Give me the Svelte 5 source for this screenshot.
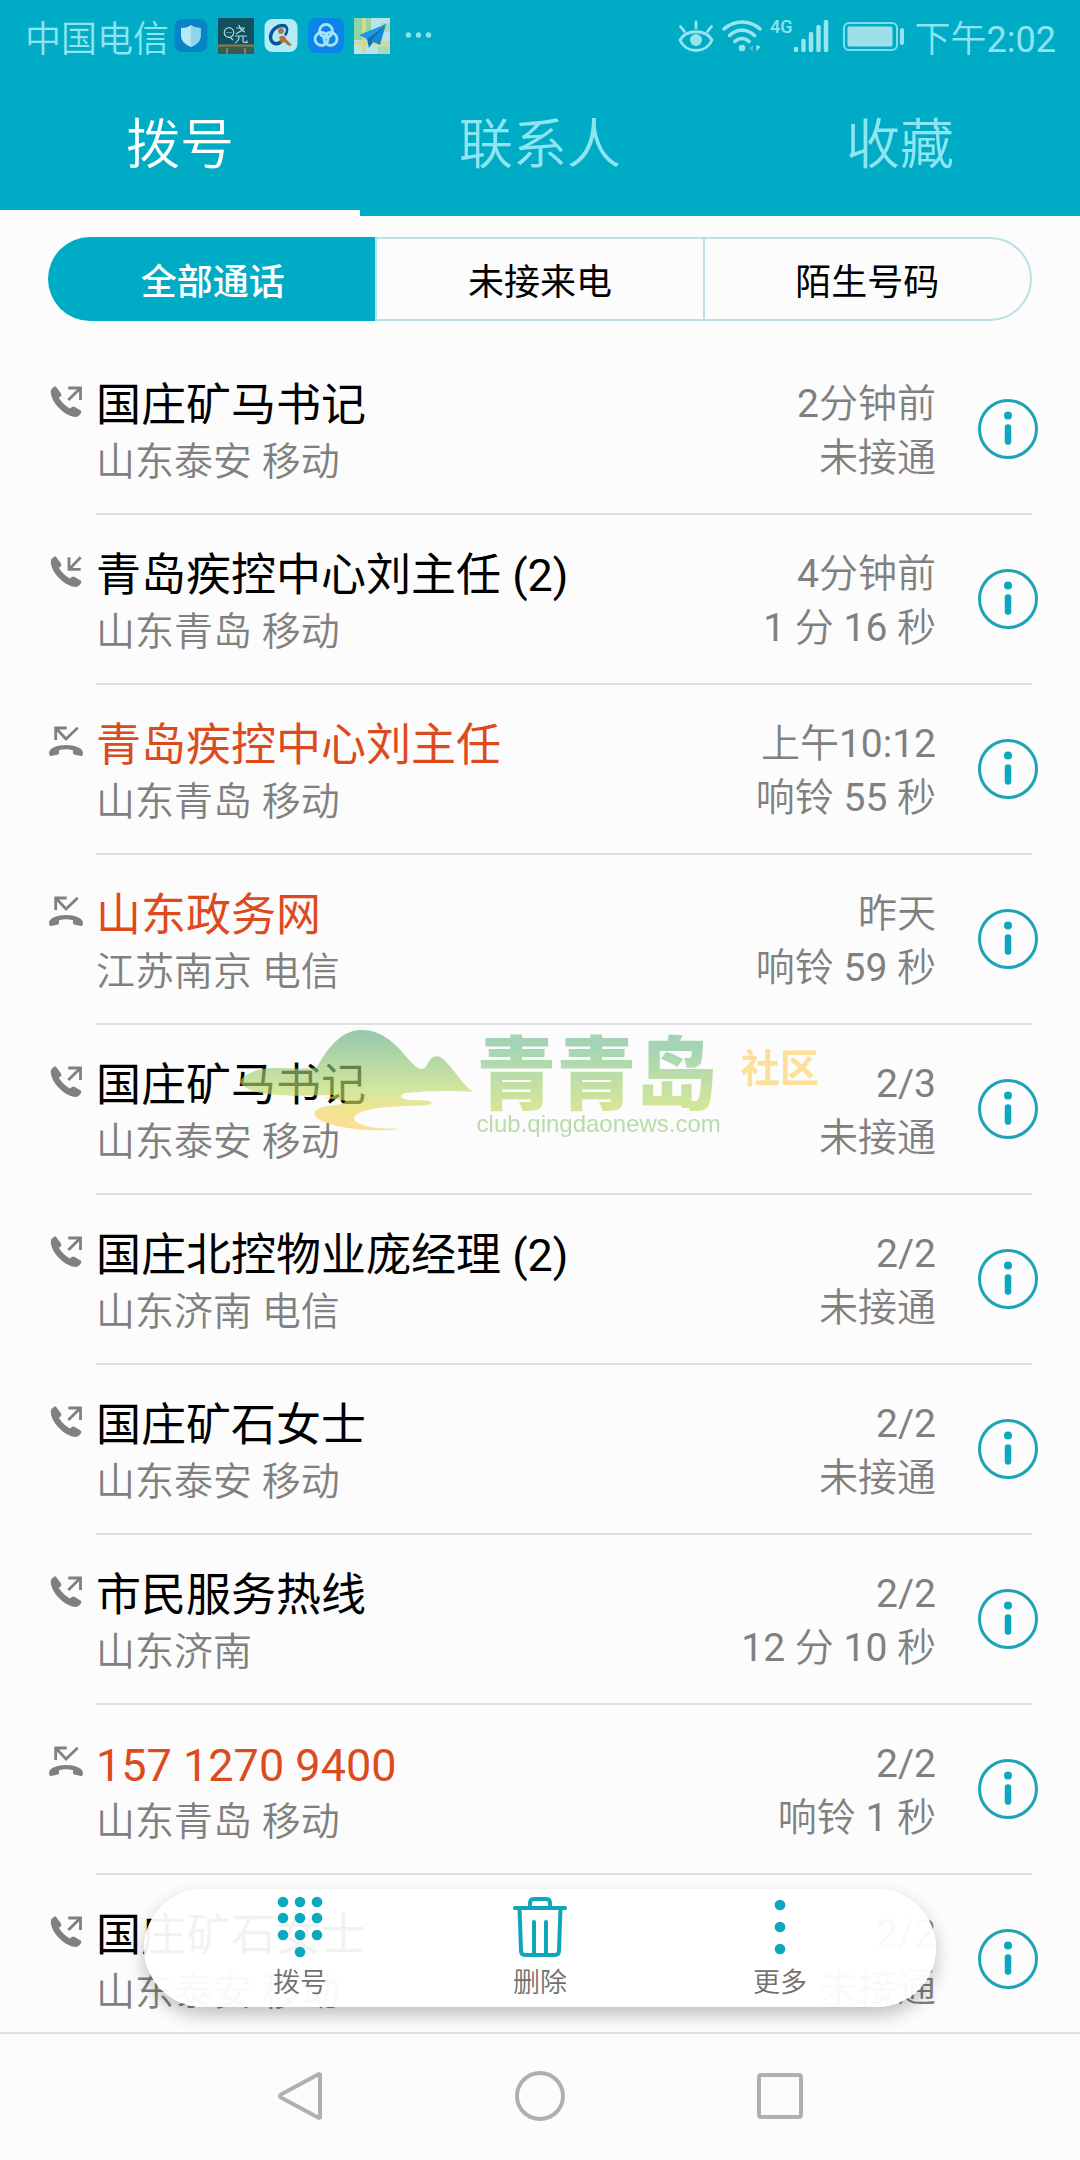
<script lang="ts">
  type CallKind = "out" | "in" | "missed";

  interface Call {
    kind: CallKind;
    name: string;
    place: string;
    time: string;
    status: string;
  }

  const tabs = ["拨号", "联系人", "收藏"];
  const filters = ["全部通话", "未接来电", "陌生号码"];

  const calls: Call[] = [
    { kind: "out", name: "国庄矿马书记", place: "山东泰安 移动", time: "2分钟前", status: "未接通" },
    { kind: "in", name: "青岛疾控中心刘主任 (2)", place: "山东青岛 移动", time: "4分钟前", status: "1 分 16 秒" },
    { kind: "missed", name: "青岛疾控中心刘主任", place: "山东青岛 移动", time: "上午10:12", status: "响铃 55 秒" },
    { kind: "missed", name: "山东政务网", place: "江苏南京 电信", time: "昨天", status: "响铃 59 秒" },
    { kind: "out", name: "国庄矿马书记", place: "山东泰安 移动", time: "2/3", status: "未接通" },
    { kind: "out", name: "国庄北控物业庞经理 (2)", place: "山东济南 电信", time: "2/2", status: "未接通" },
    { kind: "out", name: "国庄矿石女士", place: "山东泰安 移动", time: "2/2", status: "未接通" },
    { kind: "out", name: "市民服务热线", place: "山东济南", time: "2/2", status: "12 分 10 秒" },
    { kind: "missed", name: "157 1270 9400", place: "山东青岛 移动", time: "2/2", status: "响铃 1 秒" },
    { kind: "out", name: "国庄矿石女士", place: "山东泰安 移动", time: "2/2", status: "未接通" },
  ];

  let activeTab = $state(0);
  let activeFilter = $state(0);
</script>

<div class="phone">
  <header>
    <div class="status">
      <span class="carrier">中国电信</span>
      <div class="apps">
        <svg width="34" height="36" viewBox="0 0 34 36">
          <rect x="0.5" y="1" width="33" height="33" rx="8" fill="#0784c8" />
          <path d="M17 7c3 2.400 6 3 9.600 3v8c0 5-4 8.500-9.600 11C11.400 26.500 7 23 7 18v-8c4 0 7-.6 10-3z" fill="#b5e8f5" />
          <path d="M17 7c3 2.400 6 3 9.600 3v8c0 5-4 8.500-9.600 11z" fill="#8fd3ec" />
        </svg>
        <svg width="36" height="36" viewBox="0 0 36 36">
          <rect width="36" height="36" fill="#12505f" />
          <path d="M0 27h36v9H0z" fill="#3c5a50" />
          <path d="M0 27.500h36" stroke="#8a7d4a" stroke-width="2" />
          <path d="M9 30v6M27 30v6" stroke="#7d7f62" stroke-width="2" />
          <g fill="none" stroke="#a9dbe2" stroke-width="1.200">
            <circle cx="11" cy="14.500" r="4.800" />
            <path d="M12 19l3 3M8.500 14.500h1m1 0h1m1 0h1" />
            <path d="M18 10h9M21 7c1 4 3 6 6 7M26 11l-8 5M17 18h12M21 18c0 4-1 5-4 7M25 18v5c0 1.500 1 1.500 4 1.500v-2" />
          </g>
        </svg>
        <svg width="34" height="36" viewBox="0 0 34 36">
          <rect x="0.500" y="1" width="33" height="33" rx="8" fill="#b4ecf6" />
          <path d="M21 8C14 6 7 12 6.500 19C7 27 14 27 18 23" fill="none" stroke="#0b5396" stroke-width="3.500" stroke-linecap="round" />
          <path d="M20 7.500c4 1 4 6 1 10" fill="none" stroke="#0b5396" stroke-width="2.500" />
          <circle cx="17" cy="13" r="3" fill="#a8794d" />
          <path d="M15 19c3-2 6-2 7 2l6 6-3 1-5-4-3 1z" fill="#b8713c" />
        </svg>
        <svg width="36" height="36" viewBox="0 0 36 36">
          <rect width="36" height="35" rx="8" fill="#0a84ea" />
          <g fill="none" stroke="#a8e3f5" stroke-width="2.800">
            <circle cx="18" cy="13" r="6.500" />
            <circle cx="13.500" cy="21" r="6.500" />
            <circle cx="22.500" cy="21" r="6.500" />
          </g>
        </svg>
        <svg width="36" height="36" viewBox="0 0 36 36">
          <rect width="36" height="36" fill="#b9e3ec" />
          <path d="M0 0h17v22H0z" fill="#8fd6a4" />
          <path d="M27 5h9v9h-9zM24 28h12v8H24z" fill="#a5dcb4" />
          <path d="M10 0v36M0 25h36" stroke="#d5d88f" stroke-width="4" />
          <path d="M32 6L5 17l8 4z" fill="#1a9be0" />
          <path d="M32 6L13 21l2 9 4-6z" fill="#0d6fb5" />
          <path d="M32 6L17 23l9 4z" fill="#1689d2" />
        </svg>
        <svg width="36" height="36" viewBox="0 0 36 36" fill="#8ae0ee">
          <circle cx="8.500" cy="17" r="2.700" />
          <circle cx="18.500" cy="17" r="2.700" />
          <circle cx="28.500" cy="17" r="2.700" />
        </svg>
      </div>
      <div class="signals">
        <svg width="36" height="36" viewBox="0 0 36 36" fill="none" stroke="#97e3ee" stroke-width="2.800" stroke-linecap="round">
          <path d="M2 22C8 11 28 11 34 22C28 36 8 36 2 22z" />
          <path d="M2.500 8.500l4 5M18 4v6M33.500 8.500l-4 5" />
          <circle cx="18" cy="22" r="6" fill="#97e3ee" stroke="none" />
        </svg>
        <svg width="40" height="36" viewBox="0 0 40 36" fill="none" stroke="#97e3ee" stroke-width="3.500" stroke-linecap="round">
          <path d="M2 11C12 1.500 28 1.500 38 11M7.500 17.500c7-7 18-7 25 0M13 23.500c4-4 10-4 14 0" />
          <circle cx="20" cy="30" r="3.300" fill="#97e3ee" stroke="none" />
          <path d="M34.500 27v6.500l4-5z" fill="#97e3ee" stroke="none" />
          <path d="M31 27v6.500l-4-3z" fill="#45c5d8" stroke="none" />
        </svg>
        <div class="cell">
          <span>4G</span>
          <svg width="36" height="36" viewBox="0 0 36 36" stroke="#97e3ee" stroke-width="4.500" stroke-linecap="round">
            <path d="M3 31v1M10.500 23v9M18 16v16M25.500 9v23M33 4v28" />
          </svg>
        </div>
        <svg class="battery" width="62" height="36" viewBox="0 0 62 36">
          <rect x="1" y="5" width="53" height="27" rx="5" fill="none" stroke="#7fdcea" stroke-width="2" />
          <rect x="4.500" y="8.500" width="45" height="20" rx="2" fill="#9fe0e8" />
          <rect x="57" y="10" width="4" height="17" rx="2" fill="#97e3ee" />
        </svg>
        <span class="clock">下午2:02</span>
      </div>
    </div>
    <nav class="tabs">
      {#each tabs as tab, i}
        <button class:active={activeTab === i} onclick={() => (activeTab = i)}>{tab}</button>
      {/each}
    </nav>
  </header>

  <div class="filters">
    {#each filters as filter, i}
      <button class:active={activeFilter === i} onclick={() => (activeFilter = i)}>{filter}</button>
    {/each}
  </div>

  <main>
    <ul class="calls">
      {#each calls as call}
        <li>
          <svg class="kind" width="36" height="36" viewBox="0 0 36 36">
            {#if call.kind === "missed"}
              <path
                class="solid"
                d="M1 29C1 24 9 21 18 21S35 24 35 29L34.500 31.200Q34 32.300 33 32L26 30.500Q25 30 25 29V26.200Q18 24.500 11 26.200V29Q11 30 10 30.500L3 32Q1.800 32.200 1.500 31.200Z"
              />
              <path class="line" d="M7.700 16V4H18.700M7.700 4L18 15L29.700 3.700" />
            {:else}
              <path
                class="solid"
                d="M8 2.700L13 9.500Q14 11.300 12.600 12.400L10.800 13.800Q15 20.500 21.800 24.600L24 22.900Q25.300 22.200 26.800 23L32.600 26.600Q34 27.800 33 29.300Q31 33 27 33C16 31.500 3 18.500 2.700 7.500Q3.500 4 6.600 2.500Q7.400 2 8 2.700Z"
              />
              {#if call.kind === "out"}
                <path class="line" d="M20.300 4H32.500V16M32 4.500L20.300 16" />
              {:else}
                <path class="line" d="M21 3.300V15.300H32.700M21.500 15L32.700 3.300" />
              {/if}
            {/if}
          </svg>
          <div class="who">
            <div class="name" class:missed={call.kind === "missed"}>{call.name}</div>
            <div class="place">{call.place}</div>
          </div>
          <div class="when">
            <div>{call.time}</div>
            <div>{call.status}</div>
          </div>
          <button class="info" aria-label="详情">
            <svg width="60" height="60" viewBox="0 0 60 60">
              <circle cx="30" cy="30" r="28.500" fill="none" stroke="#1ca3b6" stroke-width="3" />
              <circle cx="30" cy="16.500" r="4" fill="#0ba8bf" />
              <path d="M30 28.500v14" stroke="#0ba8bf" stroke-width="6.500" stroke-linecap="round" />
            </svg>
          </button>
        </li>
      {/each}
    </ul>

    <div class="watermark">
      <svg width="236" height="104" viewBox="0 0 236 104">
        <defs>
          <linearGradient id="hill" x1="0" y1="0" x2="0" y2="1">
            <stop offset="0" stop-color="#5fac82" />
            <stop offset="0.600" stop-color="#bddc6c" />
            <stop offset="0.800" stop-color="#efd858" />
            <stop offset="1" stop-color="#fdce63" />
          </linearGradient>
        </defs>
        <path
          fill="url(#hill)"
          d="M2 52C4 44 22 38 34 38C52 38 68 40 79 37C94 10 108 0 124 0C150 0 165 24 175 34C181 41 186 40 189 35C194 24 201 24 208 32C218 42 224 54 235 62C212 60 185 61 168 63C160 65 161 69 172 70C188 70 194 71 194 73C190 77 172 75 150 77C112 80 108 91 128 96C138 99 152 98 162 99C128 103 95 97 82 90C72 84 76 78 90 76C97 75 104 75 107 72C109 70 100 70 86 68C88 67 96 67 98 65C60 66 10 68 2 52Z"
        />
      </svg>
      <div class="wordmark">
        <span class="brand">青青岛</span>
        <span class="url">club.qingdaonews.com</span>
      </div>
      <span class="community">社区</span>
    </div>

    <div class="actions">
      <button>
        <svg width="60" height="64" viewBox="0 0 60 64" fill="#0ba8bf">
          {#each [13, 30, 47] as cx}
            {#each [7, 23, 40] as cy}
              <circle {cx} {cy} r="5.300" />
            {/each}
          {/each}
          <circle cx="30" cy="57" r="5.300" />
        </svg>
        拨号
      </button>
      <button>
        <svg width="60" height="64" viewBox="0 0 60 64" fill="none" stroke="#0fa5ba" stroke-width="4" stroke-linecap="round" stroke-linejoin="round">
          <path d="M5 13h50M9.500 13l1.500 43q.2 4 4 4h30q3.800 0 4-4l1.500-43M20 13V8q0-4 4-4h12q4 0 4 4v5M24 27v32M36 27v32" />
        </svg>
        删除
      </button>
      <button>
        <svg width="60" height="64" viewBox="0 0 60 64" fill="#0ba8bf">
          <circle cx="30" cy="10" r="5.300" />
          <circle cx="30" cy="32" r="5.300" />
          <circle cx="30" cy="54" r="5.300" />
        </svg>
        更多
      </button>
    </div>
  </main>

  <footer>
    <button aria-label="返回">
      <svg width="54" height="54" viewBox="0 0 54 54"><path d="M47 5.500v43q-1 .8-2 0L8 28.500q-2-1.500 0-3L45 5.500q1-.8 2 0z" /></svg>
    </button>
    <button aria-label="主页">
      <svg width="54" height="54" viewBox="0 0 54 54"><circle cx="27" cy="27" r="23" /></svg>
    </button>
    <button aria-label="最近任务">
      <svg width="54" height="54" viewBox="0 0 54 54"><rect x="6" y="6" width="42" height="42" rx="2" /></svg>
    </button>
  </footer>
</div>

<style>
  :global(body) {
    background: #fcfcfc;
  }
  .phone {
    display: flex;
    flex-direction: column;
    height: 100vh;
    font-family: Roboto, "Noto Sans CJK SC", sans-serif;
    color: #000;
  }
  svg {
    display: block;
    flex: none;
  }
  button {
    font: inherit;
    color: inherit;
    background: none;
    border: none;
    padding: 0;
    cursor: pointer;
  }
  header {
    background: #00acc5;
  }
  .status,
  .tabs,
  .place,
  .when,
  .actions {
    font-family: Roboto, "Noto Sans CJK SC DemiLight", "Noto Sans CJK SC", sans-serif;
  }
  .status {
    display: flex;
    align-items: center;
    box-sizing: border-box;
    height: 74px;
    padding: 0 24px 2px 25px;
    color: #8ee4f0;
    font-size: 36px;
  }
  .apps {
    display: flex;
    gap: 10px;
    margin-left: 5px;
  }
  .signals {
    display: flex;
    align-items: center;
    gap: 8px;
    margin-left: auto;
  }
  .cell {
    display: flex;
  }
  .cell span {
    font-size: 18px;
    line-height: 18px;
    font-weight: 500;
  }
  .battery {
    margin: 0 2px 0 6px;
  }
  .tabs {
    display: flex;
  }
  .tabs button {
    flex: 1;
    height: 142px;
    padding-bottom: 4px;
    border-bottom: 6px solid transparent;
    font-size: 54px;
    color: #8ee5f2;
  }
  .tabs button.active {
    color: #fff;
    border-bottom-color: #fff;
  }
  .filters {
    display: flex;
    margin: 21px 48px 24px;
    flex: none;
  }
  .filters button {
    flex: 1;
    height: 84px;
    border: 2px solid #b9e1e6;
    border-right-width: 0;
    font-size: 36px;
  }
  .filters button:first-child {
    border-radius: 42px 0 0 42px;
  }
  .filters button:last-child {
    border-right-width: 2px;
    border-radius: 0 42px 42px 0;
  }
  .filters button.active {
    background: #00acc5;
    border-color: #00acc5;
    color: #fff;
    font-weight: 500;
  }
  main {
    position: relative;
    flex: 1;
    min-height: 0;
  }
  .calls {
    height: 100%;
    margin: 0;
    padding: 0;
    list-style: none;
    overflow-y: auto;
    scrollbar-width: none;
  }
  li {
    position: relative;
    display: flex;
    box-sizing: border-box;
    height: 170px;
    padding: 32px 42px 0 48px;
  }
  li::after {
    content: "";
    position: absolute;
    left: 96px;
    right: 48px;
    bottom: 0;
    height: 2px;
    background: #e0e0e0;
  }
  .kind {
    margin: 7px 12px 0 0;
  }
  .solid {
    fill: #808080;
  }
  .line {
    fill: none;
    stroke: #808080;
    stroke-width: 2.8;
  }
  .who {
    flex: 1;
  }
  .name {
    font-size: 45px;
    line-height: 58px;
  }
  .missed {
    color: #dc4b1e;
  }
  .place,
  .when {
    font-size: 39px;
    line-height: 54px;
    color: #808080;
  }
  .when {
    text-align: right;
  }
  .info {
    align-self: flex-start;
    margin: 22px 0 0 42px;
  }
  .watermark {
    position: absolute;
    top: 685px;
    left: 22%;
    display: flex;
    opacity: 0.65;
    pointer-events: none;
  }
  .wordmark {
    display: flex;
    flex-direction: column;
    margin-left: 3px;
  }
  .brand {
    padding-top: 8px;
    font-size: 80px;
    line-height: 76px;
    font-weight: 900;
    color: transparent;
    background: linear-gradient(#76bf90 20%, #bedb64 90%);
    background-clip: text;
  }
  .url {
    font-family: "Liberation Sans", sans-serif;
    font-size: 24px;
    line-height: 20px;
    color: #92cb7c;
  }
  .community {
    margin: 9px 0 0 20px;
    font-size: 39px;
    line-height: 60px;
    font-weight: 700;
    color: #fcd064;
  }
  .actions {
    position: absolute;
    left: 144px;
    right: 144px;
    bottom: 25px;
    display: flex;
    box-sizing: border-box;
    height: 118px;
    padding: 0 36px;
    border-radius: 59px;
    background: rgba(255, 255, 255, 0.95);
    box-shadow: 0 8px 18px rgba(0, 0, 0, 0.24);
  }
  .actions button {
    flex: 1;
    display: flex;
    flex-direction: column;
    align-items: center;
    padding-top: 6px;
    font-size: 27px;
    line-height: 48px;
    color: #707070;
  }
  footer {
    display: flex;
    flex: none;
    height: 124px;
    padding: 0 180px 2px;
    border-top: 2px solid #e0e0e0;
  }
  footer button {
    flex: 1;
    display: flex;
    align-items: center;
    justify-content: center;
  }
  footer path,
  footer circle,
  footer rect {
    fill: none;
    stroke: #b0b0b0;
    stroke-width: 4;
  }
</style>
